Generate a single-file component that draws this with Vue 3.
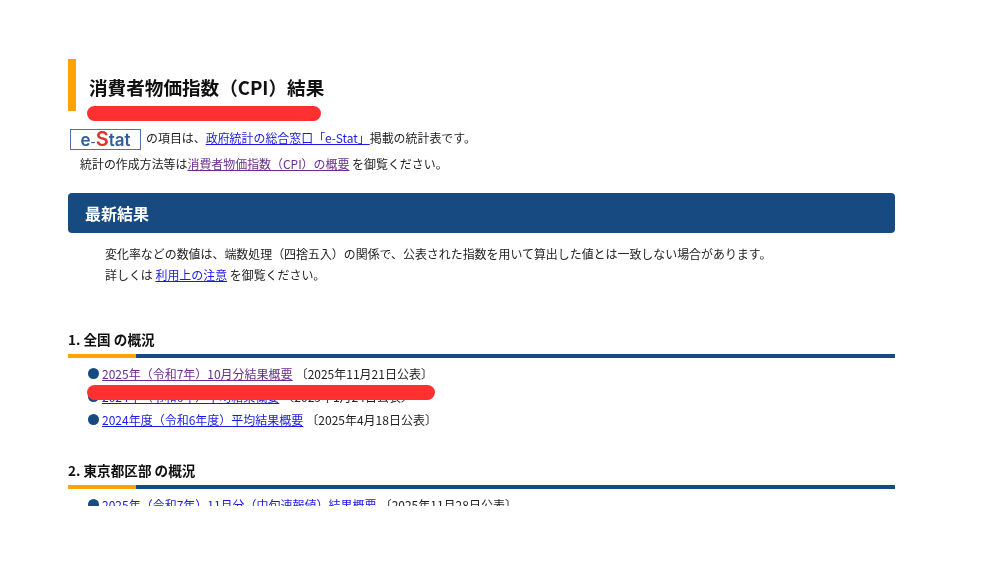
<script setup>
const sections = [
  {
    title: '1. 全国 の概況',
    items: [
      { text: '2025年（令和7年）10月分結果概要', date: '〔2025年11月21日公表〕', visited: true },
      { text: '2024年（令和6年）平均結果概要', date: '〔2025年1月24日公表〕', visited: false },
      { text: '2024年度（令和6年度）平均結果概要', date: '〔2025年4月18日公表〕', visited: false }
    ],
    mark: true
  },
  {
    title: '2. 東京都区部 の概況',
    items: [
      { text: '2025年（令和7年）11月分（中旬速報値）結果概要', date: '〔2025年11月28日公表〕', visited: false }
    ],
    mark: false
  }
]
</script>

<template>
  <div class="page">
    <main class="content">
      <header class="title-wrap">
        <h1 class="title">消費者物価指数（CPI）結果</h1>
        <span class="redact redact-title"></span>
      </header>

      <p class="intro first">
        <span class="logo">e<i>-</i><b>S</b>tat</span>
        <span class="after-logo">の項目は、<a href="#">政府統計の総合窓口「e-Stat」</a>掲載の統計表です。</span>
      </p>
      <p class="intro second">統計の作成方法等は<a href="#" class="visited">消費者物価指数（CPI）の概要</a> を御覧ください。</p>

      <h2 class="band">最新結果</h2>
      <div class="note">
        <p>変化率などの数値は、端数処理（四捨五入）の関係で、公表された指数を用いて算出した値とは一致しない場合があります。</p>
        <p>詳しくは <a href="#">利用上の注意</a> を御覧ください。</p>
      </div>

      <section v-for="s in sections" :key="s.title" class="section">
        <h3 class="section-title">{{ s.title }}</h3>
        <div class="rule"><span class="rule-accent"></span></div>
        <ul class="list">
          <li v-for="item in s.items" :key="item.text" class="row">
            <span class="dot"></span>
            <a href="#" :class="{ visited: item.visited }">{{ item.text }}</a>
            <span class="date">{{ item.date }}</span>
          </li>
        </ul>
        <span v-if="s.mark" class="redact redact-list"></span>
      </section>
    </main>
  </div>
</template>

<style>
html, body { margin: 0; background: #fff; }
</style>

<style scoped>
.page {
  height: 506px;
  overflow: hidden;
  padding: 59px 105px 0 68px;
  box-sizing: border-box;
  font-family: "Noto Sans CJK JP", "Noto Sans", sans-serif;
  font-size: 11.95px;
  color: #222;
  background: #fff;
  text-spacing-trim: space-all;
  filter: blur(0.3px);
}
.content { width: 827px; }
p, h1, h2, h3, ul { margin: 0; padding: 0; }
a { color: #1a1ae6; text-decoration: underline; }
a.visited { color: #6a2c91; }

.title-wrap {
  position: relative;
  height: 52px;
  box-sizing: border-box;
  border-left: 8px solid #ffa206;
  padding: 14px 0 0 13px;
}
.title {
  font-size: 18.6px;
  line-height: 27px;
  font-weight: 700;
  color: #111;
}
.redact {
  position: absolute;
  background: #ff3030;
  border-radius: 8px;
}
.redact-title { left: 11px; top: 47px; width: 234px; height: 15px; }

.intro { line-height: 20px; }
.first {
  display: flex;
  align-items: center;
  margin: 18px 0 0 2px;
  height: 21px;
}
.logo {
  box-sizing: border-box;
  width: 71px;
  height: 21px;
  border: 1px solid #5470a8;
  font: 600 17px/19px Inter, "Liberation Sans", sans-serif;
  color: #2f5c9c;
  text-align: center;
}
.logo i { font-style: normal; font-size: 11px; }
.logo b { font-weight: 600; color: #d8342c; font-size: 20px; }
.after-logo { margin: 0 0 3px 5px; }
.second { margin: 4px 0 0 12px; }

.band {
  margin-top: 19px;
  height: 40px;
  padding-left: 17px;
  background: #174a80;
  border-radius: 4px;
  color: #fff;
  font-size: 16px;
  font-weight: 700;
  line-height: 40px;
}
.note { margin: 10px 0 0 37px; line-height: 21px; }

.section { position: relative; }
.note + .section { margin-top: 44px; }
.section + .section { margin-top: 29px; }
.section-title {
  font-size: 13.6px;
  line-height: 20px;
  font-weight: 700;
  color: #111;
}
.rule {
  margin-top: 5px;
  height: 4px;
  background: #174a80;
}
.rule-accent {
  display: block;
  width: 68px;
  height: 4px;
  background: #ffa206;
}
.list { list-style: none; margin: 4px 0 0 20px; font-size: 12px; }
.row {
  display: flex;
  align-items: center;
  height: 23px;
}
.row a, .date { margin-bottom: 1px; }
.dot {
  width: 11px;
  height: 11px;
  border-radius: 50%;
  background: #174a80;
  margin-right: 3px;
  flex: none;
}
.date { margin-left: 3px; }
.redact-list { left: 19px; top: 56px; width: 348px; height: 15px; }
</style>
